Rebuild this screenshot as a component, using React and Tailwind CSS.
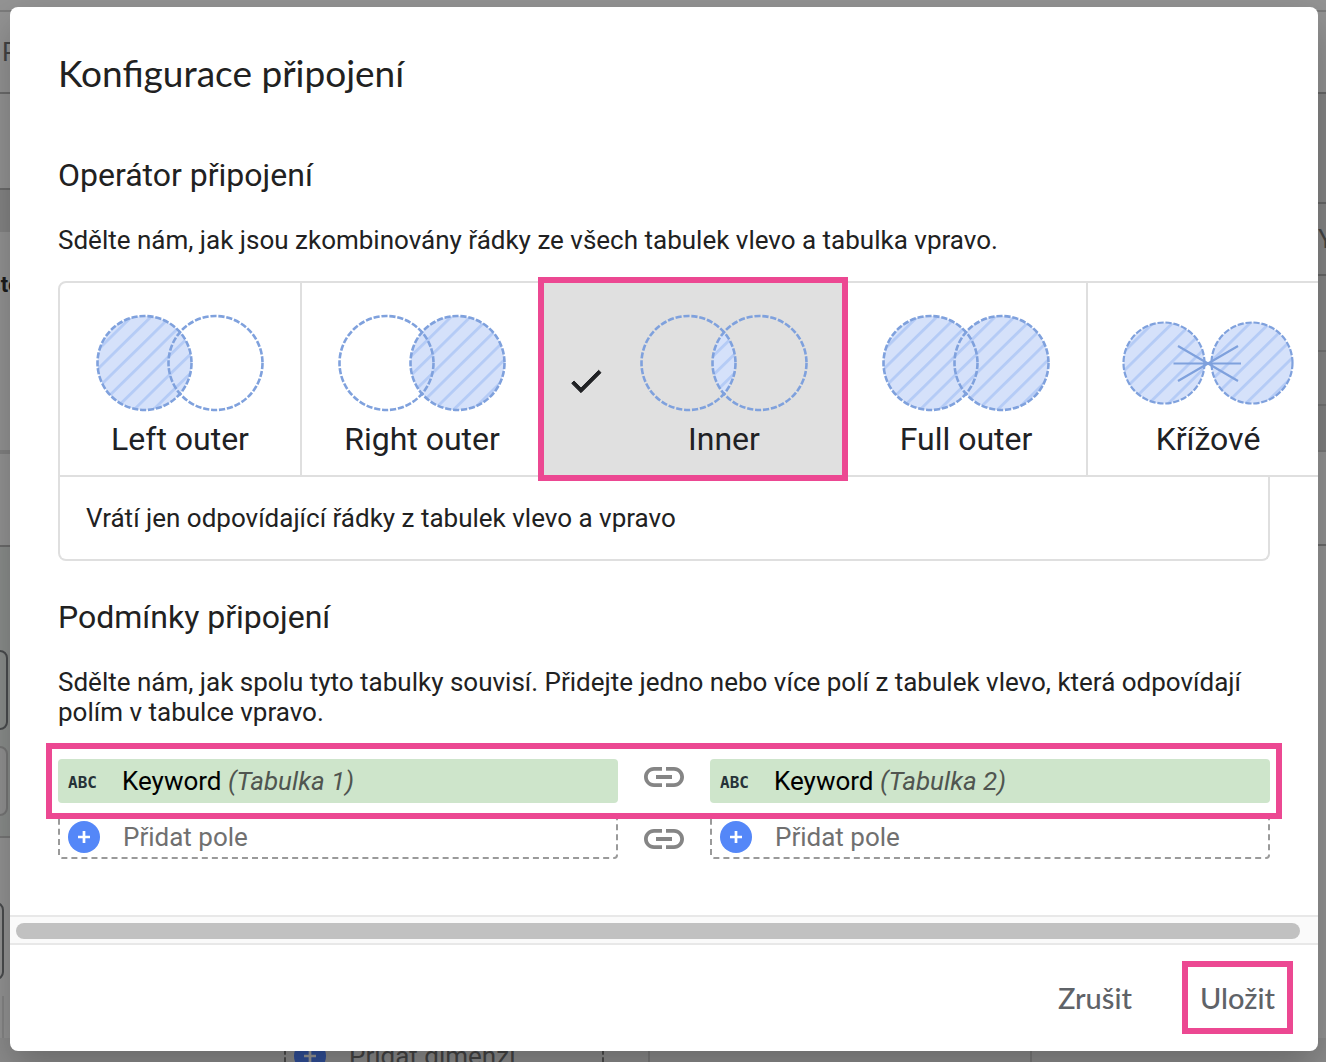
import { useState } from 'react'

const OPERATORS = [
  { id: 'left', label: 'Left outer', hint: 'Vrátí všechny řádky z tabulek vlevo' },
  { id: 'right', label: 'Right outer', hint: 'Vrátí všechny řádky z tabulky vpravo' },
  { id: 'inner', label: 'Inner', hint: 'Vrátí jen odpovídající řádky z tabulek vlevo a vpravo' },
  { id: 'full', label: 'Full outer', hint: 'Vrátí všechny řádky z tabulek vlevo a vpravo' },
  { id: 'cross', label: 'Křížové', hint: 'Vrátí všechny kombinace řádků' },
]

const TABLES = ['Tabulka 1', 'Tabulka 2']

function JoinDiagram({ type }) {
  const hatch = `url(#hatch-${type})`
  const ring = { fill: 'none', stroke: '#7fa1dd', strokeWidth: 2.6, strokeDasharray: '6.2 1.8' }

  return (
    <svg width="172" height="100" viewBox="0 0 172 100" aria-hidden="true">
      <defs>
        <pattern id={`hatch-${type}`} width="13.6" height="13.6" patternUnits="userSpaceOnUse" patternTransform="translate(48.6 48.1) rotate(-44.5)">
          <rect width="13.6" height="13.6" fill="#d5e1fa" />
          <rect width="13.6" height="2.8" fill="#b4cbf6" />
        </pattern>
        <clipPath id={`clip-${type}`}>
          <circle cx="50.5" cy="50" r="47" />
        </clipPath>
      </defs>
      {type === 'cross' ? (
        <>
          <circle cx="42" cy="50" r="40.5" fill={hatch} />
          <circle cx="130" cy="50" r="40.5" fill={hatch} />
          <circle cx="42" cy="50" r="40.5" {...ring} strokeWidth="2.2" />
          <circle cx="130" cy="50" r="40.5" {...ring} strokeWidth="2.2" />
          <path d="M51.5 50.5H119M56 33l60 35M56 68l60-35" fill="none" stroke="#7fa1dd" strokeWidth="2.2" />
        </>
      ) : (
        <>
          {(type === 'left' || type === 'full') && <circle cx="50.5" cy="50" r="47" fill={hatch} />}
          {(type === 'right' || type === 'full') && <circle cx="121.5" cy="50" r="47" fill={hatch} />}
          {type === 'inner' && <circle cx="121.5" cy="50" r="47" fill={hatch} clipPath={`url(#clip-${type})`} />}
          <circle cx="50.5" cy="50" r="47" {...ring} />
          <circle cx="121.5" cy="50" r="47" {...ring} />
        </>
      )}
    </svg>
  )
}

function IconCheck() {
  return (
    <svg width="40" height="40" viewBox="0 0 24 24" fill="#202124" stroke="#202124" strokeWidth="0.6" aria-hidden="true">
      <path d="M9 16.17L4.83 12l-1.42 1.41L9 19 21 7l-1.41-1.41z" />
    </svg>
  )
}

function IconLink() {
  return (
    <svg width="48" height="48" viewBox="0 0 24 24" fill="#858585" aria-hidden="true">
      <path d="M3.9 12c0-1.71 1.39-3.1 3.1-3.1h4V7H7c-2.76 0-5 2.24-5 5s2.24 5 5 5h4v-1.9H7c-1.71 0-3.1-1.39-3.1-3.1zM8 13h8v-2H8v2zm9-6h-4v1.9h4c1.71 0 3.1 1.39 3.1 3.1s-1.39 3.1-3.1 3.1h-4V17h4c2.76 0 5-2.24 5-5s-2.24-5-5-5z" />
    </svg>
  )
}

function IconAdd({ color = '#5487f8', plus = '#fff' }) {
  return (
    <svg width="32" height="32" viewBox="0 0 32 32" className="shrink-0" aria-hidden="true">
      <circle cx="16" cy="16" r="16" fill={color} />
      <path d="M16 10v12M10 16h12" stroke={plus} strokeWidth="2.7" />
    </svg>
  )
}

function OperatorOption({ option, selected, onSelect }) {
  return (
    <label
      className={`relative flex shrink-0 items-center border-2 border-[#dfdfdf] -ml-0.5 first:ml-0 first:rounded-tl-lg cursor-pointer ${
        selected ? 'bg-[#e0e0e0]' : 'bg-white'
      }`}
    >
      <input
        type="radio"
        name="operator"
        value={option.id}
        checked={selected}
        onChange={() => onSelect(option.id)}
        className="sr-only"
      />
      {selected && (
        <span className="w-[60px] pt-1 pl-[22px]">
          <IconCheck />
        </span>
      )}
      <span className="flex w-60 flex-col items-center pt-[30px] pb-4">
        <JoinDiagram type={option.id} />
        <span className="mt-1.5 text-[32px] leading-10 text-[#202124]">{option.label}</span>
      </span>
      {selected && <span className="pointer-events-none absolute -inset-y-1.5 -left-1.5 -right-1 z-10 border-6 border-[#ec4892]" />}
    </label>
  )
}

function FieldChip({ table }) {
  return (
    <button type="button" className="flex h-11 items-center rounded bg-[#cee5cb] pl-2.5 text-left text-[26px] leading-[30px] text-black">
      <span className="w-[54px] pt-1 font-['DejaVu_Sans_Mono',monospace] text-base font-bold text-[#263238]">ABC</span>
      <span>
        Keyword <i className="text-[#505550]">({table})</i>
      </span>
    </button>
  )
}

function AddField() {
  return (
    <button type="button" className="flex h-11 items-center gap-[23px] rounded border-2 border-dashed border-[#9a9a9a] pl-2 text-left text-[26px] leading-[30px] text-[#707070]">
      <IconAdd />
      Přidat pole
    </button>
  )
}

// Dimmed editor that shows round the edges of the dialog
function Backdrop() {
  return (
    <div className="flex h-screen flex-col justify-between overflow-hidden bg-[#949494] text-[26px] leading-8 text-[#444]" aria-hidden="true">
      <div className="flex min-h-0 flex-1 justify-between">
        <div className="w-5 overflow-hidden whitespace-nowrap">
          <div className="h-3 border-b-2 border-[#7c7c7c]" />
          <div className="flex h-[82px] items-center border-b-2 border-[#6c6c6c] pl-0.5">P</div>
          <div className="h-24 border-b-2 border-[#6c6c6c]" />
          <div className="h-[42px] bg-[#858585]" />
          <div className="flex h-[218px] items-center justify-end pb-28 text-[22px] font-bold text-[#1c1c1c]">Soubor ste</div>
          <div className="h-[97px] border-t-4 border-b-2 border-t-[#828282] border-b-[#6c6c6c]" />
          <div className="h-[291px] border-b-2 border-[#777] bg-[#8b8e8c] pt-[103px]">
            <div className="-ml-2 h-20 w-4 rounded-lg border-2 border-[#4a4c4e]" />
            <div className="-ml-2 mt-4 h-[70px] w-4 rounded-lg border-2 border-[#777] bg-[#929292]" />
          </div>
          <div className="mt-16 -ml-3 h-[78px] w-4 rounded-lg border-2 border-[#4a4c4e]" />
          <div className="mt-4 ml-0.5 h-20 border-l-2 border-[#858585]" />
        </div>
        <div className="w-4 overflow-hidden">
          <div className="h-3 border-b-2 border-[#7c7c7c]" />
          <div className="h-[82px] border-b-2 border-[#686868]" />
          <div className="h-[110px] border-b-2 border-[#686868] bg-[#868686]" />
          <div className="flex h-[72px] items-center border-b-2 border-[#686868] bg-[#868686] pl-2">Y</div>
          <div className="h-[76px] border-b-2 border-[#747474] bg-[#868686]" />
          <div className="h-[54px] border-b-2 border-[#747474] bg-[#868686]" />
          <div className="h-[46px] border-b-2 border-[#7a7a7a] bg-[#828282]" />
          <div className="h-[94px] border-b-2 border-[#6c6c6c]" />
        </div>
      </div>
      <div className="flex h-6 items-start justify-between bg-[#8c8c8c] pt-0.5 pr-[294px] pl-[284px]">
        <div className="flex w-80 items-center gap-[23px] border-x-2 border-dashed border-[#4c4c4c] pl-2">
          <IconAdd color="#31509a" plus="#999" />
          Přidat dimenzi
        </div>
        <div className="h-6 w-96 border-x-2 border-[#7a7a7a]" />
      </div>
    </div>
  )
}

export default function App() {
  const [operator, setOperator] = useState('inner')
  const current = OPERATORS.find((o) => o.id === operator)

  return (
    <div className="relative font-[Roboto,sans-serif] text-[#212121]">
      <Backdrop />

      <div
        role="dialog"
        aria-labelledby="dialog-title"
        className="absolute inset-x-0 top-0 mt-[7px] mr-2 ml-2.5 overflow-hidden rounded-lg bg-white shadow-[0_16px_40px_rgba(0,0,0,0.25)]"
      >
        <div className="overflow-hidden px-12 pt-[42px] pb-14">
          <h1 id="dialog-title" className="font-[Lato,sans-serif] text-[37px] leading-[48px]">Konfigurace připojení</h1>

          {/* Join operator */}
          <h2 className="mt-[58px] text-[32px] leading-10">Operátor připojení</h2>
          <p className="mt-[30px] text-[26px] leading-[30px]">
            Sdělte nám, jak jsou zkombinovány řádky ze všech tabulek vlevo a tabulka vpravo.
          </p>
          <div className="mt-[26px]">
            <div className="flex" role="radiogroup" aria-label="Operátor připojení">
              {OPERATORS.map((o) => (
                <OperatorOption key={o.id} option={o} selected={o.id === operator} onSelect={setOperator} />
              ))}
            </div>
            <p className="rounded-b-lg border-2 border-t-0 border-[#dfdfdf] px-[26px] py-[26px] text-[26px] leading-[30px]">{current.hint}</p>
          </div>

          {/* Join conditions */}
          <h2 className="mt-9 text-[32px] leading-10">Podmínky připojení</h2>
          <p className="mt-[30px] text-[26px] leading-[30px]">
            Sdělte nám, jak spolu tyto tabulky souvisí. Přidejte jedno nebo více polí z tabulek vlevo, která odpovídají polím v tabulce vpravo.
          </p>
          <div className="relative mt-8 grid h-11 grid-cols-[1fr_92px_1fr]">
            <FieldChip table={TABLES[0]} />
            <span className="-mt-1.5 flex justify-center">
              <IconLink />
            </span>
            <FieldChip table={TABLES[1]} />
            <span className="pointer-events-none absolute -inset-x-3 -inset-y-4 z-10 border-6 border-[#ec4892]" />
          </div>
          <div className="mt-3 grid h-11 grid-cols-[1fr_92px_1fr]">
            <AddField />
            <span className="flex items-center justify-center">
              <IconLink />
            </span>
            <AddField />
          </div>
        </div>

        {/* Horizontal scrollbar */}
        <div className="h-[30px] border-y-2 border-[#e8e8e8] bg-[#fafafa] pt-1.5 pr-[18px] pb-1 pl-1.5">
          <div className="h-full rounded-full bg-[#c1c1c1]" />
        </div>

        <div className="flex justify-end gap-8 pt-4 pr-[25px] pb-[17px] font-[Lato,sans-serif] text-[29px] leading-9 font-medium text-[#5f6368]">
          <button type="button" className="px-[18px]">Zrušit</button>
          <button type="button" className="h-[73px] border-6 border-[#ec4892] px-3">Uložit</button>
        </div>
      </div>
    </div>
  )
}
